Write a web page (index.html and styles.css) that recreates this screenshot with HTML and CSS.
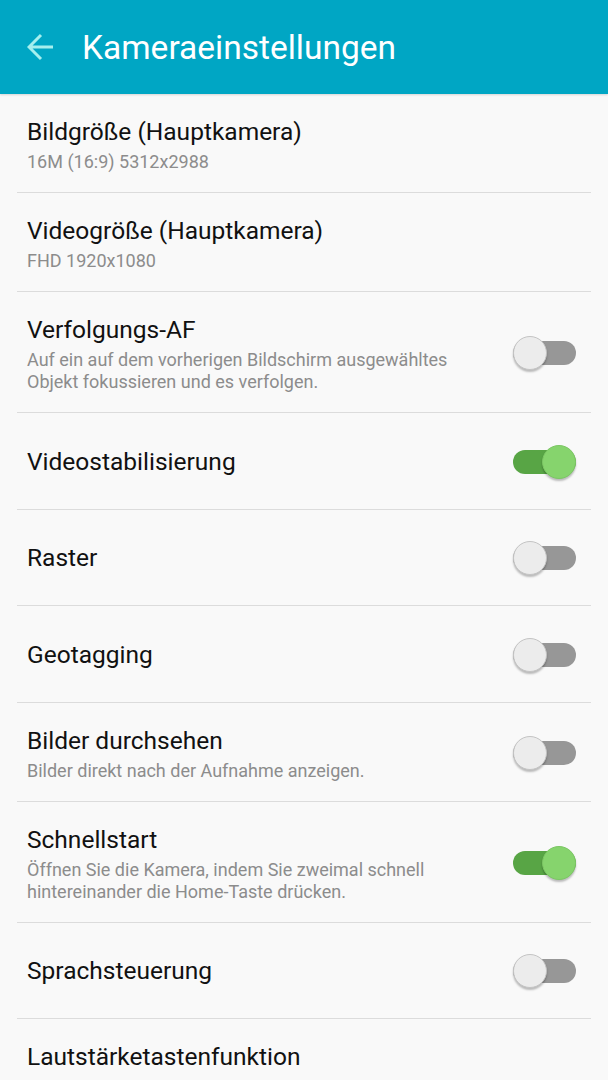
FILE: index.html
```html
<!doctype html>
<html lang="de">
<head>
	<meta charset="UTF-8">
	<title>Kameraeinstellungen</title>
	<link rel="stylesheet" href="styles.css">
</head>
<body>
	<div class="topbar">
		<svg class="back" width="28" height="28" viewBox="0 0 28 28">
			<path d="M26 14H3M14 2L2 14l12 12" fill="none" stroke="#a6efee" stroke-width="3"/>
		</svg>
		<h1>Kameraeinstellungen</h1>
	</div>
	<ul class="list">
		<li>
			<div class="text">
				<div class="title">Bildgröße (Hauptkamera)</div>
				<div class="sub">16M (16:9) 5312x2988</div>
			</div>
		</li>
		<li>
			<div class="text">
				<div class="title">Videogröße (Hauptkamera)</div>
				<div class="sub">FHD 1920x1080</div>
			</div>
		</li>
		<li>
			<div class="text">
				<div class="title">Verfolgungs-AF</div>
				<div class="sub">Auf ein auf dem vorherigen Bildschirm ausgewähltes Objekt fokussieren und es verfolgen.</div>
			</div>
			<span class="switch"></span>
		</li>
		<li>
			<div class="text">
				<div class="title">Videostabilisierung</div>
			</div>
			<span class="switch on"></span>
		</li>
		<li>
			<div class="text">
				<div class="title">Raster</div>
			</div>
			<span class="switch"></span>
		</li>
		<li>
			<div class="text">
				<div class="title">Geotagging</div>
			</div>
			<span class="switch"></span>
		</li>
		<li>
			<div class="text">
				<div class="title">Bilder durchsehen</div>
				<div class="sub">Bilder direkt nach der Aufnahme anzeigen.</div>
			</div>
			<span class="switch"></span>
		</li>
		<li>
			<div class="text">
				<div class="title">Schnellstart</div>
				<div class="sub">Öffnen Sie die Kamera, indem Sie zweimal schnell hintereinander die Home-Taste drücken.</div>
			</div>
			<span class="switch on"></span>
		</li>
		<li>
			<div class="text">
				<div class="title">Sprachsteuerung</div>
			</div>
			<span class="switch"></span>
		</li>
		<li>
			<div class="text">
				<div class="title">Lautstärketastenfunktion</div>
				<div class="sub">Zoom</div>
			</div>
		</li>
	</ul>
</body>
</html>
```
FILE: styles.css
```css
html, body{
	margin: 0;
	padding: 0;
	height: 100%;
	overflow: hidden;
}
body{
	background: #f9f9f9;
	font-family: Roboto, "Noto Sans", sans-serif;
}
.topbar{
	height: 94px;
	background: #00a6c4;
	display: flex;
	align-items: center;
	padding-left: 27px;
	box-shadow: 0 1px 2px rgba(0,0,0,0.15);
	position: relative;
}
.back{
	display: block;
	width: 28px;
	height: 28px;
}
.topbar h1{
	margin: 0 0 0 27px;
	font-size: 33.5px;
	font-weight: 400;
	color: #fff;
}
.list{
	list-style: none;
	margin: 0 17px;
	padding: 0;
}
.list li{
	display: flex;
	align-items: center;
	min-height: 55.5px;
	padding: 21px 15px 19px 10px;
	border-bottom: 1px solid #dcdcdc;
}
.text{
	flex: 1;
}
.title{
	font-size: 24.5px;
	line-height: 34px;
	color: #111;
}
.sub{
	margin-top: 2px;
	font-size: 18px;
	line-height: 22px;
	color: #8c8c8c;
	padding-right: 40px;
}
.switch{
	position: relative;
	width: 63px;
	height: 34px;
	flex: none;
}
.switch::before{
	content: "";
	position: absolute;
	left: 0;
	right: 0;
	top: 5px;
	height: 24px;
	border-radius: 12px;
	background: #979797;
}
.switch::after{
	content: "";
	position: absolute;
	left: 0;
	top: 0;
	width: 32px;
	height: 32px;
	border-radius: 50%;
	background: #ececec;
	border: 1px solid #c4c4c4;
	box-shadow: 0 2px 2px rgba(0,0,0,0.25);
}
.switch.on::before{
	background: #58a545;
}
.switch.on::after{
	left: 29px;
	background: #86d46d;
	border-color: #7cc764;
}
```
